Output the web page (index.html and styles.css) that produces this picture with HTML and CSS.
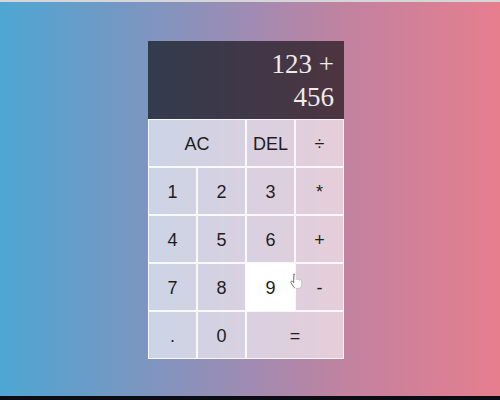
FILE: index.html
```html
<!DOCTYPE html>
<html>
<head>
<meta charset="utf-8">
<link rel="stylesheet" href="styles.css">
</head>
<body>
<div class="topline"></div>
<main class="stage">
  <div class="calculator">
    <div class="output">
      <div class="previous">123 +</div>
      <div class="current">456</div>
    </div>
    <button class="span-two">AC</button>
    <button>DEL</button>
    <button>÷</button>
    <button>1</button>
    <button>2</button>
    <button>3</button>
    <button>*</button>
    <button>4</button>
    <button>5</button>
    <button>6</button>
    <button>+</button>
    <button>7</button>
    <button>8</button>
    <button class="hovered">9
      <svg class="cursor" width="13" height="16" viewBox="0 0 13 16">
        <path d="M4 1.2c.8 0 1.3.5 1.3 1.3v4.3c.2-.5.6-.8 1.1-.8.6 0 1 .4 1.1.9.2-.4.6-.6 1-.6.6 0 1 .4 1.1 1 .2-.3.5-.4.9-.4.7 0 1.2.5 1.2 1.2v3.4c0 2.3-1.6 4-3.8 4H6.6c-1.3 0-2.2-.6-3-1.700L1 9.9c-.4-.6-.2-1.3.3-1.6.5-.3 1.1-.2 1.5.3l.9 1.1V2.5C2.7 1.7 3.2 1.2 4 1.2z" fill="#fff" stroke="#555" stroke-width=".8"/>
      </svg>
    </button>
    <button>-</button>
    <button>.</button>
    <button>0</button>
    <button class="span-two">=</button>
  </div>
</main>
<div class="bottombar"></div>
</body>
</html>
```

FILE: styles.css
```css
* { box-sizing: border-box; }
html, body { margin: 0; height: 100%; }
body {
  display: flex;
  flex-direction: column;
  background: linear-gradient(to right, #4ea6d3 0%, #7e95c0 30%, #a08bb2 50%, #c3829f 70%, #e67e8e 100%);
  font-family: "Liberation Sans", Arial, sans-serif;
}
.topline {
  height: 2px;
  background: #d6d6d8;
}
.stage {
  flex: 1;
  display: flex;
  justify-content: center;
  align-items: flex-start;
  padding: 39px 8px 0 0;
}
.calculator {
  display: grid;
  grid-template-columns: repeat(4, 49px);
  grid-template-rows: 78px repeat(5, 48px);
}
.output {
  grid-column: 1 / -1;
  background: rgba(0, 0, 0, 0.6);
  padding: 7px 10px 0 8px;
  text-align: right;
  font-family: "Liberation Serif", "Times New Roman", serif;
  font-size: 27px;
  line-height: 33px;
  color: #ececec;
}
button {
  position: relative;
  font-family: "Liberation Sans", Arial, sans-serif;
  font-size: 18px;
  color: #1e1e1e;
  background: rgba(255, 255, 255, 0.6);
  border: 1px solid rgba(255, 255, 255, 0.85);
  padding: 3px 0 0 0;
  margin: 0;
  outline: none;
}
.span-two { grid-column: span 2; }
.hovered { background: #fff; }
.cursor {
  position: absolute;
  left: 43px;
  top: 9px;
}
.bottombar {
  height: 4px;
  background: #0b0c14;
}
```
